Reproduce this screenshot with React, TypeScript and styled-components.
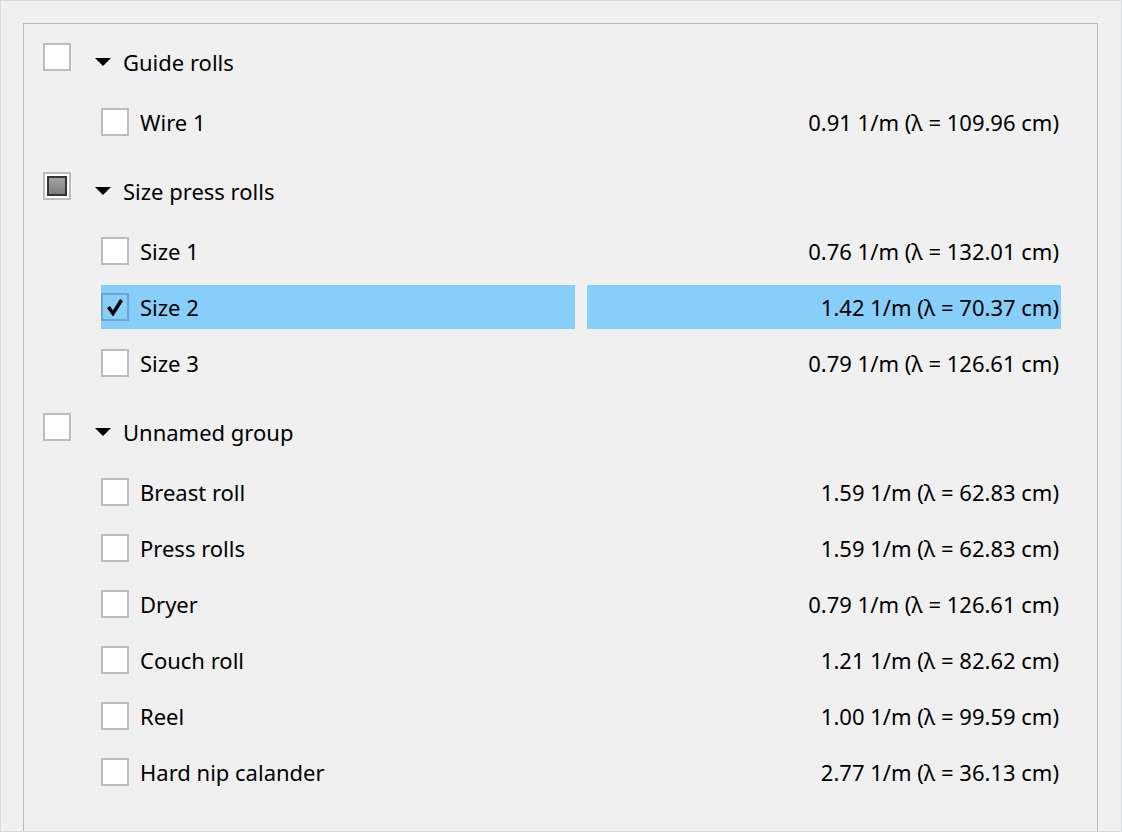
import styled, { createGlobalStyle } from "styled-components";

type CheckState = "unchecked" | "checked" | "partial";

interface Item {
  name: string;
  value: string;
  checked?: boolean;
  selected?: boolean;
}

interface Group {
  name: string;
  state: CheckState;
  items: Item[];
}

const groups: Group[] = [
  {
    name: "Guide rolls",
    state: "unchecked",
    items: [{ name: "Wire 1", value: "0.91 1/m (λ = 109.96 cm)" }],
  },
  {
    name: "Size press rolls",
    state: "partial",
    items: [
      { name: "Size 1", value: "0.76 1/m (λ = 132.01 cm)" },
      { name: "Size 2", value: "1.42 1/m (λ = 70.37 cm)", checked: true, selected: true },
      { name: "Size 3", value: "0.79 1/m (λ = 126.61 cm)" },
    ],
  },
  {
    name: "Unnamed group",
    state: "unchecked",
    items: [
      { name: "Breast roll", value: "1.59 1/m (λ = 62.83 cm)" },
      { name: "Press rolls", value: "1.59 1/m (λ = 62.83 cm)" },
      { name: "Dryer", value: "0.79 1/m (λ = 126.61 cm)" },
      { name: "Couch roll", value: "1.21 1/m (λ = 82.62 cm)" },
      { name: "Reel", value: "1.00 1/m (λ = 99.59 cm)" },
      { name: "Hard nip calander", value: "2.77 1/m (λ = 36.13 cm)" },
    ],
  },
];

const GlobalStyle = createGlobalStyle`
  html, body {
    margin: 0;
    padding: 0;
    background: #f0f0f0;
  }
  body {
    font-family: "Noto Sans", "Open Sans", sans-serif;
    color: #000;
  }
`;

const Window = styled.div`
  box-sizing: border-box;
  width: 1122px;
  height: 832px;
  border: 1px solid #d6dce4;
  padding: 22px 0 0 22px;
  background: #f0f0f0;
  overflow: hidden;
`;

const Panel = styled.div`
  box-sizing: border-box;
  width: 1075px;
  height: 820px;
  border: 1px solid #b9b9b9;
  border-bottom: none;
  padding-top: 5px;
`;

const GroupBlock = styled.div`
  margin-bottom: 8px;
`;

const GroupHeader = styled.div`
  display: flex;
  align-items: flex-start;
  height: 65px;
  padding-left: 19px;
`;

const Box = styled.div<{ $tint?: boolean }>`
  box-sizing: border-box;
  flex: none;
  width: 28px;
  height: 28px;
  border: 2px solid ${({ $tint }) => ($tint ? "#6aa6cf" : "#bdbdbd")};
  background: ${({ $tint }) => ($tint ? "transparent" : "#fff")};
  display: flex;
  align-items: center;
  justify-content: center;
`;

const HeaderBox = styled(Box)`
  margin-top: 14px;
`;

const PartialMark = styled.div`
  box-sizing: border-box;
  width: 20px;
  height: 20px;
  border: 2px solid #333;
  background: linear-gradient(#a3a3a3, #7c7c7c);
`;

const Toggle = styled.div`
  width: 0;
  height: 0;
  margin: 29px 0 0 24px;
  border-left: 8px solid transparent;
  border-right: 8px solid transparent;
  border-top: 8px solid #000;
`;

const GroupLabel = styled.div`
  margin: 19px 0 0 12px;
  font-size: 22px;
  line-height: 28px;
`;

const ItemRow = styled.div`
  display: grid;
  grid-template-columns: 474px 474px;
  column-gap: 12px;
  height: 56px;
  padding: 6px 0;
  box-sizing: border-box;
  margin-left: 77px;
`;

const Cell = styled.div<{ $selected?: boolean }>`
  display: flex;
  align-items: center;
  height: 44px;
  background: ${({ $selected }) => ($selected ? "#87cefa" : "transparent")};
  font-size: 22px;
  line-height: 28px;
`;

const NameCell = styled(Cell)`
  gap: 11px;
`;

const ValueCell = styled(Cell)`
  justify-content: flex-end;
  padding-right: 2px;
`;

const CheckIcon = () => (
  <svg width="18" height="18" viewBox="0 0 18 18">
    <path d="M2.5 9 L7 15.5 L15.5 2" fill="none" stroke="#000" strokeWidth="3.5" strokeLinejoin="miter" />
  </svg>
);

const GroupCheck = ({ state }: { state: CheckState }) => (
  <HeaderBox>{state === "partial" && <PartialMark />}</HeaderBox>
);

export default function App() {
  return (
    <>
      <GlobalStyle />
      <Window>
        <Panel>
          {groups.map((group) => (
            <GroupBlock key={group.name}>
              <GroupHeader>
                <GroupCheck state={group.state} />
                <Toggle />
                <GroupLabel>{group.name}</GroupLabel>
              </GroupHeader>
              {group.items.map((item) => (
                <ItemRow key={item.name}>
                  <NameCell $selected={item.selected}>
                    <Box $tint={item.selected}>{item.checked && <CheckIcon />}</Box>
                    <span>{item.name}</span>
                  </NameCell>
                  <ValueCell $selected={item.selected}>{item.value}</ValueCell>
                </ItemRow>
              ))}
            </GroupBlock>
          ))}
        </Panel>
      </Window>
    </>
  );
}
